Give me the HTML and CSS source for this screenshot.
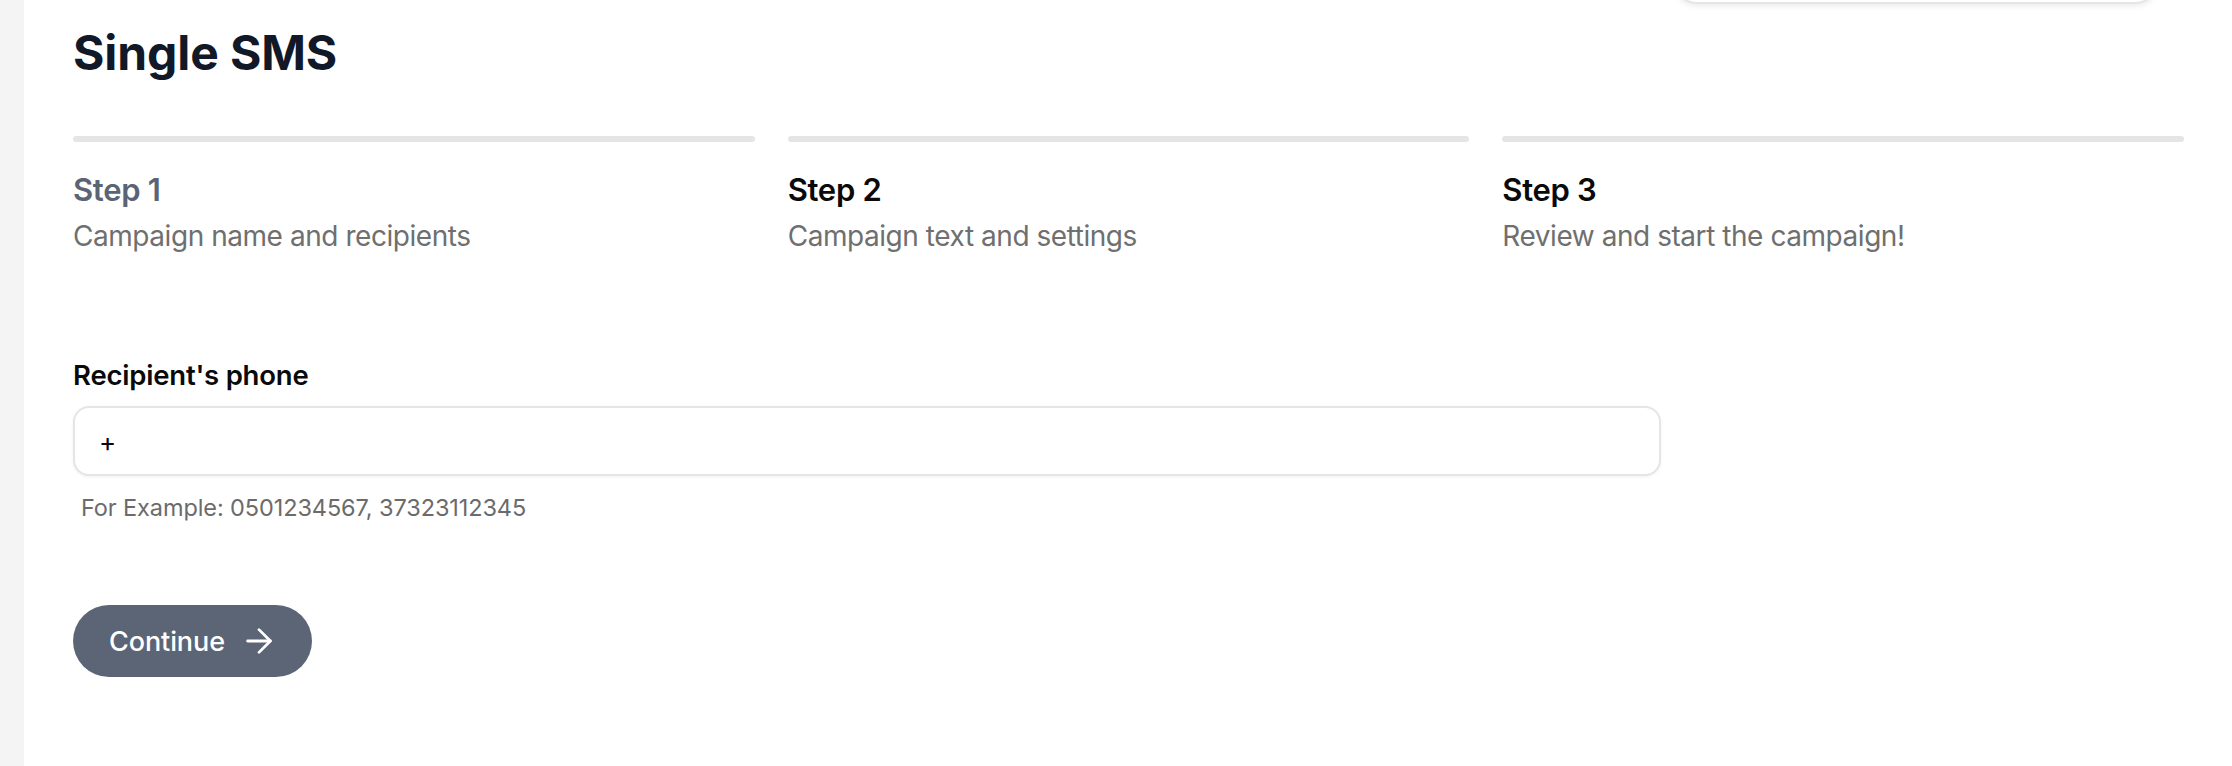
FILE: index.html
```html
<!DOCTYPE html>
<html lang="en">
<head>
<meta charset="utf-8">
<title>Single SMS</title>
<link rel="stylesheet" href="styles.css">
</head>
<body>
<div class="layout">
  <aside class="sidebar"></aside>
  <main class="main">
    <div class="topbar">
      <div class="topbar-box"></div>
    </div>
    <h1 class="page-title">Single SMS</h1>
    <ol class="steps">
      <li class="step step-active">
        <div class="step-bar"></div>
        <div class="step-title">Step 1</div>
        <div class="step-desc">Campaign name and recipients</div>
      </li>
      <li class="step">
        <div class="step-bar"></div>
        <div class="step-title">Step 2</div>
        <div class="step-desc">Campaign text and settings</div>
      </li>
      <li class="step">
        <div class="step-bar"></div>
        <div class="step-title">Step 3</div>
        <div class="step-desc">Review and start the campaign!</div>
      </li>
    </ol>
    <form class="form">
      <label class="field-label" for="phone">Recipient's phone</label>
      <div class="input">+</div>
      <p class="hint">For Example: 0501234567, 37323112345</p>
      <button type="button" class="btn">
        <span>Continue</span>
        <svg class="btn-icon" viewBox="4 4 16 16" fill="none" stroke="currentColor" stroke-width="1.7" stroke-linecap="round" stroke-linejoin="round"><path d="M5 12h14"/><path d="m12 5 7 7-7 7"/></svg>
      </button>
    </form>
  </main>
</div>
</body>
</html>
```

FILE: styles.css
```css
* { box-sizing: border-box; }
html, body { margin: 0; padding: 0; background: #ffffff; }
body {
  font-family: Inter, "Noto Sans", "Liberation Sans", sans-serif;
  color: #0a0a0a;
  width: 2232px;
  height: 766px;
  overflow: hidden;
}
.layout { display: flex; min-height: 766px; }
.sidebar { width: 24px; flex: none; background: #f4f4f4; }
.main { flex: 1; padding: 0 48px 0 49px; }

.topbar {
  display: flex;
  justify-content: flex-end;
  height: 50px;
  margin-top: -46px;
  padding-right: 25px;
}
.topbar-box {
  width: 486px;
  height: 50px;
  border: 2px solid #e5e5e5;
  border-radius: 24px;
  background: #fff;
  box-shadow: 0 2px 6px rgba(0,0,0,0.08);
}

.page-title {
  margin: 20px 0 0;
  font-size: 48px;
  line-height: 58px;
  font-weight: 700;
  color: #111827;
  letter-spacing: -0.1px;
}

.steps {
  list-style: none;
  margin: 54px 0 0;
  padding: 0;
  display: grid;
  grid-template-columns: repeat(3, 1fr);
  column-gap: 33px;
}
.step-bar {
  height: 6px;
  border-radius: 3px;
  background: #e5e5e5;
}
.step-title {
  margin-top: 29px;
  font-size: 31px;
  line-height: 37px;
  font-weight: 600;
  color: #0a0a0a;
  letter-spacing: -0.3px;
}
.step-active .step-title { color: #5a6474; }
.step-desc {
  margin-top: 11px;
  font-size: 28px;
  line-height: 34px;
  color: #6f6f6f;
  letter-spacing: -0.45px;
}

.form { margin-top: 106px; display: flex; flex-direction: column; align-items: flex-start; }
.field-label {
  font-size: 27.5px;
  line-height: 33px;
  font-weight: 600;
  color: #0a0a0a;
  letter-spacing: -0.2px;
}
.input {
  margin-top: 14px;
  width: 1588px;
  height: 70px;
  border: 2px solid #e5e5e5;
  border-radius: 16px;
  background: #fff;
  box-shadow: 0 1px 3px rgba(0,0,0,0.06);
  display: flex;
  align-items: center;
  padding: 0 24px;
  font-size: 26px;
  color: #0a0a0a;
}
.hint {
  margin: 18px 0 0 8px;
  font-size: 23.5px;
  line-height: 28px;
  color: #6b6b6b;
  letter-spacing: -0.1px;
}
.btn {
  margin-top: 83px;
  height: 72px;
  padding: 0 40px 0 36px;
  border: none;
  border-radius: 36px;
  background: #5c6576;
  color: #ffffff;
  font-family: inherit;
  font-size: 27px;
  font-weight: 500;
  display: flex;
  align-items: center;
  gap: 21px;
  letter-spacing: -0.1px;
}
.btn-icon { width: 26px; height: 26px; }
```
